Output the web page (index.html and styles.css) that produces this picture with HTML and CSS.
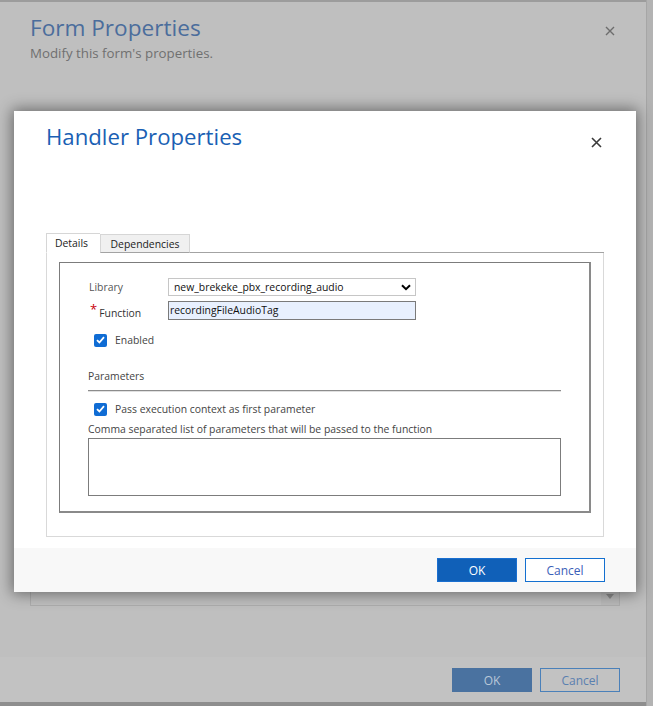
FILE: index.html
```html
<!DOCTYPE html>
<html>
<head>
<meta charset="utf-8">
<link rel="stylesheet" href="styles.css">
</head>
<body>
<div class="page">
  <div class="bg-top-line"></div>
  <div class="bg-main">
    <div class="bg-header">
      <div class="bg-titles">
        <div class="bg-title">Form Properties</div>
        <div class="bg-subtitle">Modify this form's properties.</div>
      </div>
      <svg class="bg-close" width="10" height="10" viewBox="0 0 10 10"><path d="M1 1L9 9M9 1L1 9" stroke="#6d6d6d" stroke-width="1.4"/></svg>
    </div>
    <div class="bg-content">
      <div class="bg-field"><div class="bg-field-arrow"><svg width="8" height="5" viewBox="0 0 8 5"><path d="M0 0H8L4 5Z" fill="#8a8a8a"/></svg></div></div>
    </div>
    <div class="bg-footer">
      <div class="bg-btn bg-btn-ok">OK</div>
      <div class="bg-btn bg-btn-cancel">Cancel</div>
    </div>
  </div>
  <div class="bg-right-edge"></div>
  <div class="bg-bottom-line"></div>

  <div class="modal">
    <div class="modal-header">
      <div class="modal-title">Handler Properties</div>
      <svg class="modal-close" width="11" height="11" viewBox="0 0 11 11"><path d="M1 1L10 10M10 1L1 10" stroke="#3a3a3a" stroke-width="1.6"/></svg>
    </div>
    <div class="modal-body">
      <div class="tabs">
        <div class="tab tab-active">Details</div>
        <div class="tab">Dependencies</div>
        <div class="tab-fill"></div>
      </div>
      <div class="panel">
        <div class="inner">
          <div class="row row-library">
            <div class="label">Library</div>
            <div class="select">
              <span class="select-text">new_brekeke_pbx_recording_audio</span>
              <svg class="chev" width="10" height="7" viewBox="0 0 10 7"><path d="M1 1.2L5 5.2L9 1.2" fill="none" stroke="#000" stroke-width="2"/></svg>
            </div>
          </div>
          <div class="row row-function">
            <div class="label"><span class="req">*</span>Function</div>
            <div class="input">recordingFileAudioTag</div>
          </div>
          <div class="check-row check-enabled">
            <span class="checkbox"><svg width="9" height="8" viewBox="0 0 9 8"><path d="M1 4.2L3.4 6.5L8 1.2" fill="none" stroke="#fff" stroke-width="1.8"/></svg></span>
            <span class="check-label">Enabled</span>
          </div>
          <div class="section-title">Parameters</div>
          <div class="section-line"></div>
          <div class="check-row check-pass">
            <span class="checkbox"><svg width="9" height="8" viewBox="0 0 9 8"><path d="M1 4.2L3.4 6.5L8 1.2" fill="none" stroke="#fff" stroke-width="1.8"/></svg></span>
            <span class="check-label">Pass execution context as first parameter</span>
          </div>
          <div class="hint">Comma separated list of parameters that will be passed to the function</div>
          <div class="textarea"></div>
        </div>
      </div>
    </div>
    <div class="modal-footer">
      <div class="btn btn-ok">OK</div>
      <div class="btn btn-cancel">Cancel</div>
    </div>
  </div>
</div>
</body>
</html>
```
FILE: styles.css
```css
html, body {
  margin: 0;
  padding: 0;
}
body {
  font-family: "Open Sans", "Noto Sans", sans-serif;
  background: #bfbfbf;
}
.page {
  position: relative;
  width: 653px;
  height: 706px;
  overflow: hidden;
  background: #bfbfbf;
  display: flex;
  flex-direction: column;
}
.bg-top-line {
  height: 2px;
  background: #9c9c9c;
  width: 646px;
}
.bg-main {
  width: 646px;
  height: 700px;
  display: flex;
  flex-direction: column;
}
.bg-right-edge {
  position: absolute;
  right: 0;
  top: 0;
  width: 7px;
  height: 706px;
  background: #b3b3b3;
  border-left: 1px solid #a6a6a6;
  box-sizing: border-box;
}
.bg-bottom-line {
  height: 4px;
  background: #8e8e8e;
}
.bg-header {
  display: flex;
  justify-content: space-between;
  padding: 10px 29px 0 30px;
  height: 90px;
}
.bg-title {
  font-size: 22.6px;
  line-height: 32px;
  color: #4b6d9c;
  font-weight: 400;
}
.bg-subtitle {
  font-size: 13.3px;
  line-height: 18px;
  color: #707070;
}
.bg-close {
  margin-top: 14px;
  margin-right: 2px;
}
.bg-content {
  flex: 1;
  position: relative;
}
.bg-field {
  position: absolute;
  left: 30px;
  top: 476px;
  width: 590px;
  height: 28px;
  border: 1px solid #adadad;
  box-sizing: border-box;
  display: flex;
  justify-content: flex-end;
  align-items: flex-end;
}
.bg-field-arrow {
  width: 18px;
  height: 13px;
  background: #b9b9b9;
  display: flex;
  justify-content: center;
  align-items: flex-start;
  padding-top: 2px;
  box-sizing: border-box;
}
.bg-footer {
  height: 45px;
  background: #c2c2c2;
  display: flex;
  justify-content: flex-end;
  align-items: flex-start;
  gap: 8px;
  padding: 11px 26px 0 0;
  box-sizing: border-box;
}
.bg-btn {
  width: 80px;
  height: 24px;
  box-sizing: border-box;
  display: flex;
  align-items: center;
  justify-content: center;
  font-size: 12px;
}
.bg-btn-ok {
  background: #4a72a0;
  color: #b9c7d8;
}
.bg-btn-cancel {
  border: 1px solid #4a80b9;
  color: #5a80b0;
}

/* modal */
.modal {
  position: absolute;
  left: 14px;
  top: 111px;
  width: 622px;
  height: 481px;
  background: #fff;
  box-shadow: 0 0 14px 2px rgba(0,0,0,0.45);
  display: flex;
  flex-direction: column;
}
.modal-header {
  height: 122px;
  box-sizing: border-box;
  padding: 9px 34px 0 32px;
  display: flex;
  justify-content: space-between;
  align-items: flex-start;
}
.modal-title {
  font-size: 22.2px;
  line-height: 34px;
  color: #1a5fb4;
}
.modal-close {
  margin-top: 17px;
}
.modal-body {
  padding: 0 32px;
  flex: 1;
}
.tabs {
  display: flex;
  height: 20px;
  align-items: flex-end;
}
.tab {
  height: 19px;
  box-sizing: border-box;
  border: 1px solid #d6d6d6;
  border-bottom: 1px solid #a3a3a3;
  background: #f0f0f0;
  font-size: 10.4px;
  color: #222;
  display: flex;
  align-items: center;
  padding: 0 10px;
}
.tab-active {
  height: 20px;
  background: #fff;
  border-bottom-color: #fff;
  border-right: none;
  padding: 0 10px 0 8px;
  width: 54px;
}
.tab:nth-child(2) {
  width: 90px;
  justify-content: center;
}
.tab-fill {
  flex: 1;
  height: 1px;
  background: #a3a3a3;
}
.panel {
  height: 284px;
  box-sizing: border-box;
  border: 1px solid #d9d9d9;
  border-top: none;
  padding: 9px 12px 0 12px;
}
.inner {
  height: 251px;
  box-sizing: border-box;
  border: 1px solid #7c7c7c;
  border-right-width: 2px;
  border-bottom-width: 2px;
  border-right-color: #8a8a8a;
  border-bottom-color: #8a8a8a;
  padding: 15px 0 0 28px;
}
.row {
  display: flex;
  align-items: center;
  height: 18px;
}
.row-function {
  margin-top: 5px;
}
.label {
  width: 80px;
  font-size: 10.4px;
  color: #555;
}
.row-library .label {
  padding-left: 1px;
  box-sizing: border-box;
}
.row-function .label {
  color: #333;
  padding-top: 4px;
  padding-left: 2px;
  box-sizing: border-box;
}
.req {
  color: #c8000a;
  font-size: 13px;
  margin-right: 2px;
  position: relative;
  top: -3px;
}
.select {
  width: 248px;
  height: 18px;
  box-sizing: border-box;
  border: 1px solid #c6c6c6;
  display: flex;
  align-items: center;
  justify-content: space-between;
  padding: 0 4px 0 5px;
  font-size: 10.4px;
  color: #111;
}
.input {
  width: 248px;
  height: 19px;
  box-sizing: border-box;
  border: 1px solid #7a7a7a;
  background: #e8f0fe;
  font-size: 10.4px;
  color: #111;
  padding-left: 1px;
  display: flex;
  align-items: center;
}
.check-row {
  display: flex;
  align-items: center;
  padding-left: 6px;
  height: 14px;
}
.check-enabled {
  margin-top: 14px;
}
.checkbox {
  width: 13px;
  height: 13px;
  border-radius: 2px;
  background: #0f6cd4;
  display: flex;
  align-items: center;
  justify-content: center;
}
.check-label {
  font-size: 10.4px;
  color: #444;
  margin-left: 8px;
}
.section-title {
  margin-top: 22px;
  font-size: 10.4px;
  line-height: 14px;
  color: #444;
}
.section-line {
  margin-top: 7px;
  width: 473px;
  height: 1px;
  background: #8c8c8c;
  border-bottom: 1px solid #e0e0e0;
}
.check-pass {
  margin-top: 10px;
}
.hint {
  margin-top: 6px;
  font-size: 10.4px;
  line-height: 14px;
  color: #444;
}
.textarea {
  margin-top: 2px;
  width: 473px;
  height: 58px;
  box-sizing: border-box;
  border: 1px solid #7c7c7c;
}
.modal-footer {
  height: 44px;
  background: #f8f8f8;
  display: flex;
  justify-content: flex-end;
  align-items: flex-start;
  gap: 8px;
  padding: 10px 31px 0 0;
  box-sizing: border-box;
}
.btn {
  width: 80px;
  height: 24px;
  box-sizing: border-box;
  display: flex;
  align-items: center;
  justify-content: center;
  font-size: 12px;
}
.btn-ok {
  background: #1060b8;
  border: 1px solid #1a6fd0;
  color: #fff;
}
.btn-cancel {
  background: #fff;
  border: 1px solid #1470d0;
  color: #3a60b8;
}
```
